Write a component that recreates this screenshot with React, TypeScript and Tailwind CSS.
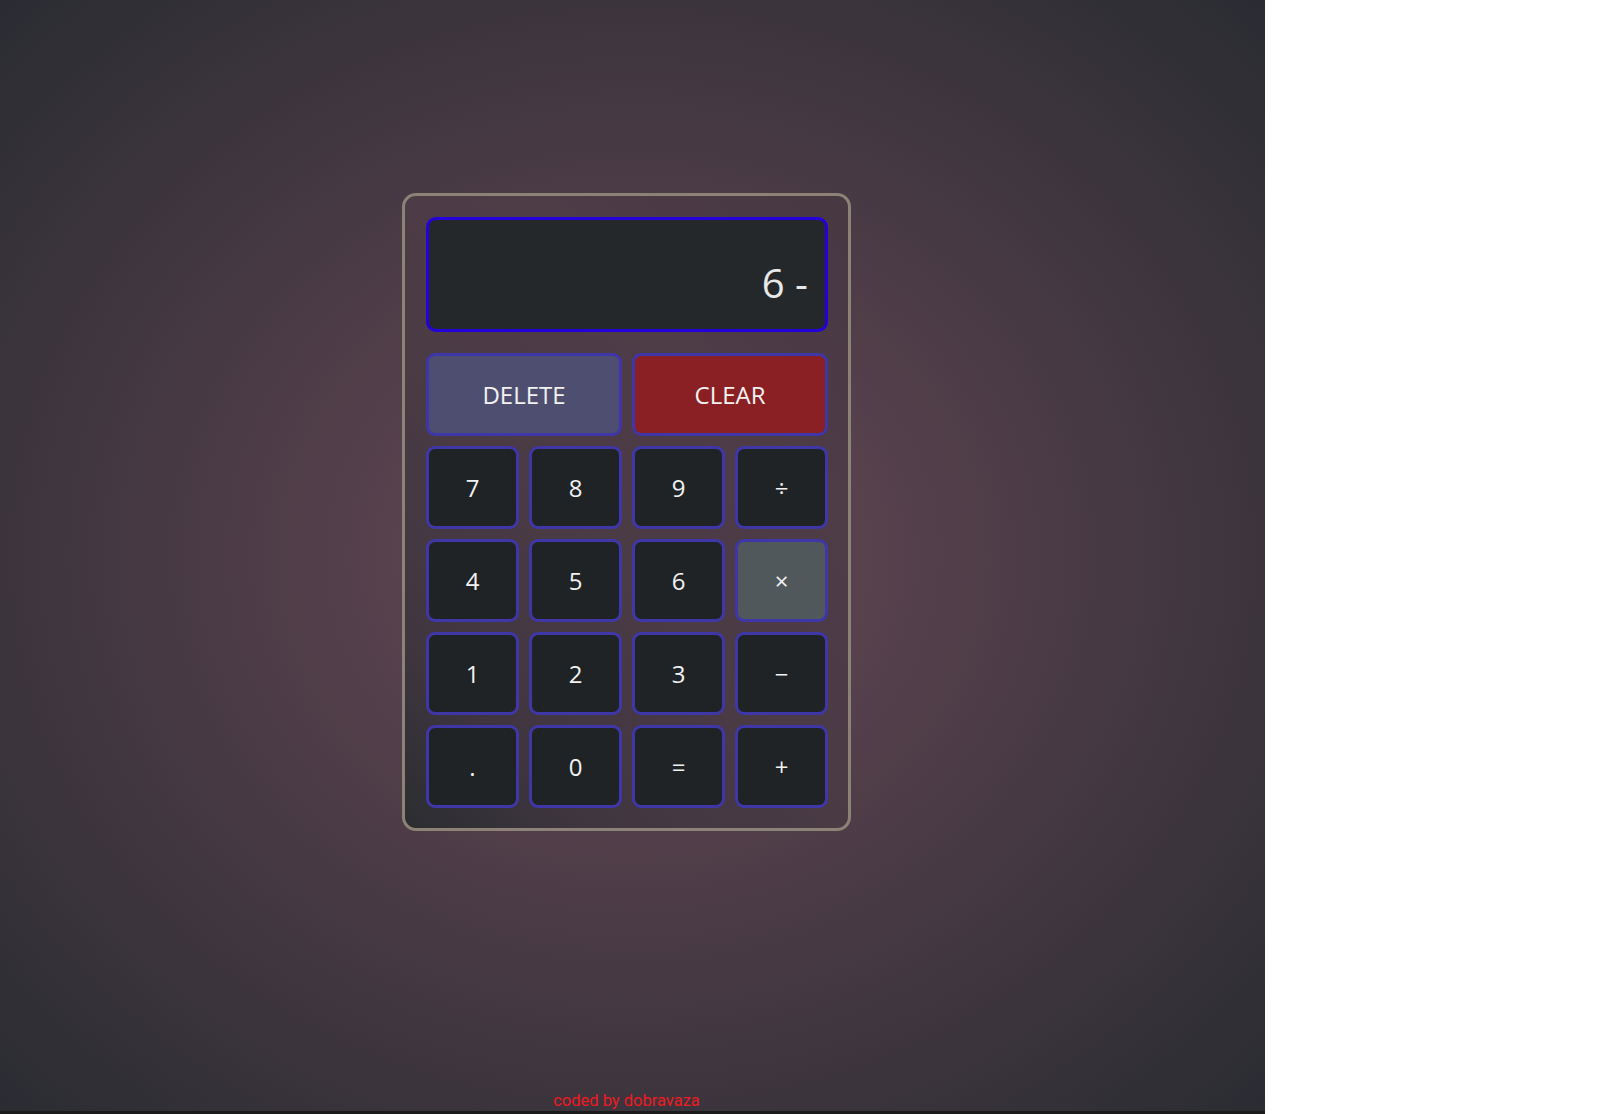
import React from "react";

const keys: { label: string; active?: boolean }[] = [
  { label: "7" }, { label: "8" }, { label: "9" }, { label: "÷" },
  { label: "4" }, { label: "5" }, { label: "6" }, { label: "×", active: true },
  { label: "1" }, { label: "2" }, { label: "3" }, { label: "−" },
  { label: "." }, { label: "0" }, { label: "=" }, { label: "+" },
];

export default function App() {
  return (
    <div className="w-[1265px] h-[1114px] flex flex-col">
      <div
        className="h-[1111px] flex flex-col bg-[radial-gradient(ellipse_at_center,#664a58_0%,#4f3d48_40%,#2a2c32_100%)]"
        style={{ fontFamily: '"Open Sans", "Noto Sans", sans-serif' }}
      >
        <div className="ml-[402px] mt-[193px] w-[449px] h-[638px] rounded-[14px] border-[3px] border-[#8c8275] bg-[linear-gradient(45deg,#2b2d31_0%,#403640_18%,#4b3b45_45%,#4e3c47_70%,#473842_100%)] pl-[21px] pt-[21px]">
          <div className="w-[402px] h-[115px] rounded-[10px] border-[3px] border-[#2400dc] bg-[#25282b] flex justify-end pr-[17px] pt-[33px]">
            <span className="text-[40px] leading-normal text-[#e8e8e8]">6 -</span>
          </div>
          <div className="mt-[21px] w-[402px] grid grid-cols-4 auto-rows-[83px] gap-[10px]">
            <button className="col-span-2 rounded-[9px] border-[3px] border-[#3f37a8] bg-[#4e4e70] text-[24px] text-[#f2f2f2] flex items-center justify-center">
              DELETE
            </button>
            <button className="col-span-2 rounded-[9px] border-[3px] border-[#3f37a8] bg-[#8a1f24] text-[24px] text-[#f2f2f2] flex items-center justify-center">
              CLEAR
            </button>
            {keys.map((k) => (
              <button
                key={k.label}
                className={
                  "rounded-[9px] border-[3px] border-[#3f37a8] text-[24px] text-[#f2f2f2] flex items-center justify-center " +
                  (k.active ? "bg-[#50585b]" : "bg-[#202325]")
                }
              >
                {k.label}
              </button>
            ))}
          </div>
        </div>
        <div className="flex-1" />
        <div
          className="ml-[402px] w-[449px] text-center text-[16.5px] leading-[20px] text-[#ee1a22]"
          style={{ fontFamily: "Roboto, Arial, sans-serif" }}
        >
          coded by dobravaza
        </div>
      </div>
      <div className="h-[3px] bg-[#1b1b1b]" />
    </div>
  );
}
